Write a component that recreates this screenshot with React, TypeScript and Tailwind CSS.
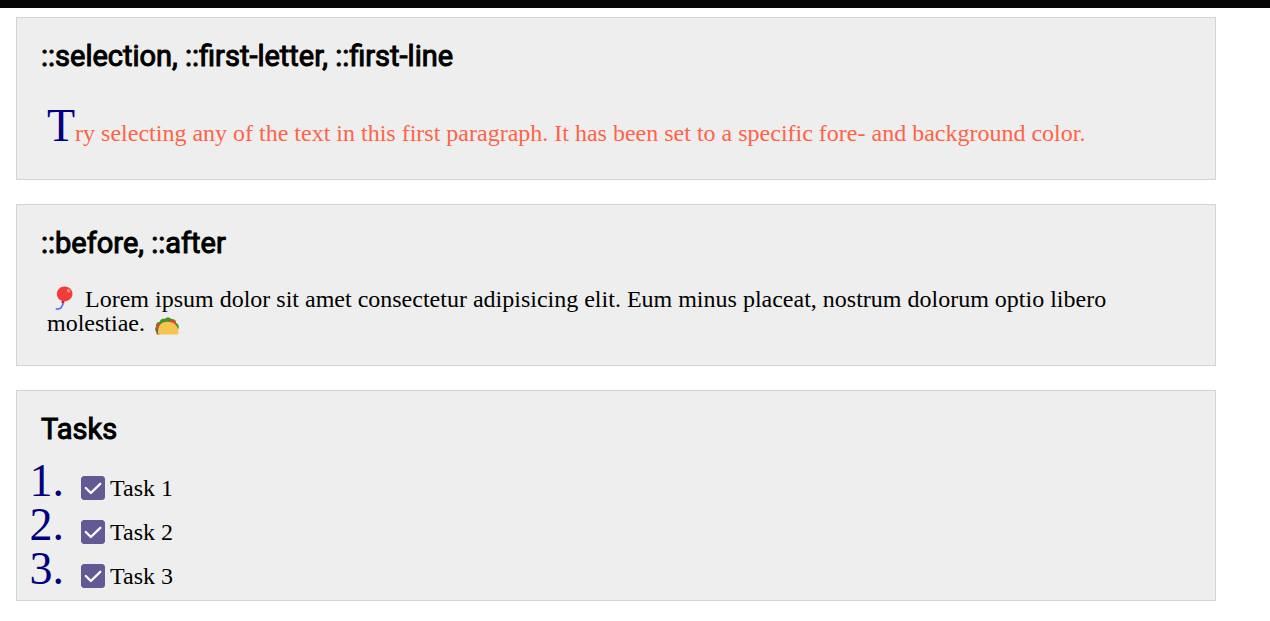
import { useState, type ReactNode } from "react";

function Panel({ title, children }: { title: string; children: ReactNode }) {
  return (
    <section className="border border-[#d3d3d3] bg-[#eeeeee] pt-6">
      <h2 className="px-6 font-['Roboto',sans-serif] text-[29px] leading-[29px] font-normal [-webkit-text-stroke:1px_black]">
        {title}
      </h2>
      {children}
    </section>
  );
}

function Balloon() {
  return (
    <svg viewBox="0 0 24 24" className="mr-[9px] ml-[5px] inline-block size-6 align-[-3px]" role="img" aria-label="balloon">
      <path d="M10.8 16.500c.6 2.500-.1 2.900-1 3.700-.8.8.2 2.900-5.600 2.900" fill="none" stroke="#4568f5" strokeWidth="1.500" strokeLinecap="round" />
      <path d="M10.600 14.300l-1.600 2.100 3.200 1 .2-2.600z" fill="#b5223c" />
      <path d="M12.400.4c4.600 0 8.100 3.200 8.100 7.300 0 4.500-4.300 8-8.600 7.600C7.700 15 4.900 11.700 4.900 8 4.900 3.700 8.200.4 12.400.4z" fill="#f33b38" />
      <ellipse cx="16.600" cy="4.800" rx="1.500" ry="2" transform="rotate(-35 16.600 4.800)" fill="#ff8b85" />
    </svg>
  );
}

function Taco() {
  return (
    <svg viewBox="0 0 24 24" className="ml-[10px] inline-block size-6 align-[-5px]" role="img" aria-label="taco">
      <path d="M1 20C-.4 17 0 15.500 1.200 14.500.2 12 2 9.800 4.500 10 5 7.500 7.500 6 9.500 7 11 5 15 5 16.200 7 19 6.500 21.500 8.500 21 11c2.500.5 3.300 4 2.400 6l-2 3z" fill="#499326" />
      <path d="M2.500 12c2-.8 3.500 0 4.500 1l-4 6c-2-2-2-5-.5-7zM15 8.200c3-.9 5.700.5 6 3.300l-2 2-4-3z" fill="#f33b38" />
      <path d="M1.500 16.500L5 13.500V22.500H2.200C1.200 22.500 1.200 19 1.500 16.500z" fill="#8d5738" />
      <path d="M3.200 22.500C2 14 6 9.700 12.500 9.700c6.900 0 11.200 4.600 10.900 11.600-.1.800-.6 1.200-1.400 1.200z" fill="#f6c451" />
    </svg>
  );
}

function Task({ number }: { number: number }) {
  const [done, setDone] = useState(true);
  return (
    <li className="flex h-11 items-baseline">
      <span className="w-[47px] text-right text-[46px] leading-[44px] text-[#000080]">{number}.</span>
      <label className="ml-[17px] flex items-baseline gap-[5px] leading-6">
        <span className="grid size-6 self-center">
          <input
            type="checkbox"
            checked={done}
            onChange={(event) => setDone(event.target.checked)}
            className="peer col-start-1 row-start-1 size-6 appearance-none rounded-[3px] border border-[#635994] checked:bg-[#635994]"
          />
          <svg viewBox="0 0 24 24" className="pointer-events-none invisible col-start-1 row-start-1 size-6 peer-checked:visible" aria-hidden="true">
            <path d="M4.800 12l5 5 9.500-9.200" fill="none" stroke="white" strokeWidth="2.300" strokeLinecap="round" strokeLinejoin="round" />
          </svg>
        </span>
        Task {number}
      </label>
    </li>
  );
}

export default function App() {
  return (
    <div className="border-t-8 border-[#060606] bg-white font-['Liberation_Serif',serif] text-2xl leading-6 text-black">
      <main className="mx-4 flex max-w-[1200px] flex-col gap-6 pt-[9px] pb-5">
        <Panel title="::selection, ::first-letter, ::first-line">
          <p className="mt-8 px-[30px] pb-[30px] first-letter:text-[46px] first-letter:leading-[46px] first-letter:text-[#000080] first-line:text-[#ff6347] selection:bg-[#000080] selection:text-white">
            Try selecting any of the text in this first paragraph. It has been set to a specific fore- and background color.
          </p>
        </Panel>
        <Panel title="::before, ::after">
          <p className="mt-7 max-w-[1140px] px-[30px] pb-[29px]">
            <Balloon />
            Lorem ipsum dolor sit amet consectetur adipisicing elit. Eum minus placeat, nostrum dolorum optio libero molestiae.
            <Taco />
          </p>
        </Panel>
        <Panel title="Tasks">
          <ol className="mt-[15px] pb-[9px]">
            <Task number={1} />
            <Task number={2} />
            <Task number={3} />
          </ol>
        </Panel>
      </main>
    </div>
  );
}
